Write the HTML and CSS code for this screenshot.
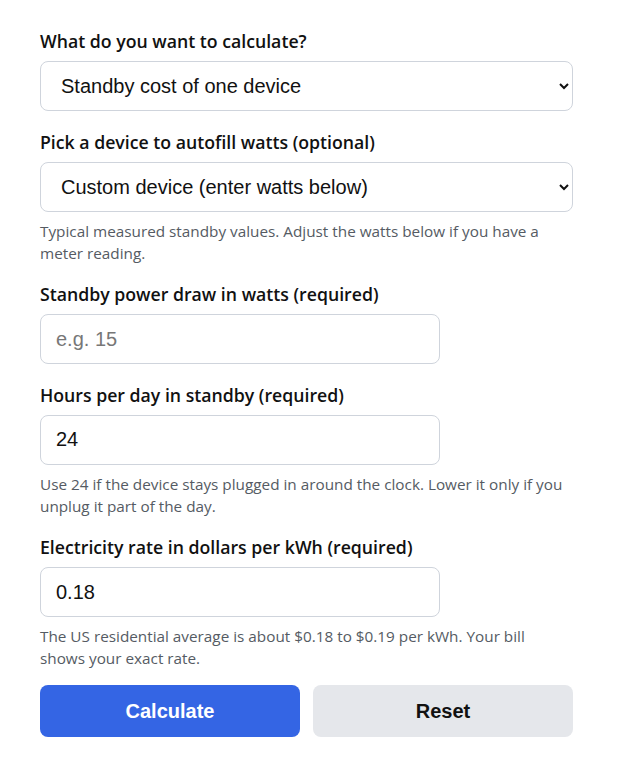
FILE: index.html
```
<!DOCTYPE html>
<html lang="en">
<head>
    <meta charset="UTF-8">
    <meta name="viewport" content="width=device-width, initial-scale=1.0">
    <title>Standby Power Cost Calculator</title>
    <link rel="stylesheet" href="styles.css">
</head>
<body>
    <form class="calc-form">
        <div class="field">
            <label for="mode">What do you want to calculate?</label>
            <select id="mode" class="control">
                <option>Standby cost of one device</option>
                <option>Standby cost of a whole home</option>
            </select>
        </div>

        <div class="field">
            <label for="device">Pick a device to autofill watts (optional)</label>
            <select id="device" class="control">
                <option>Custom device (enter watts below)</option>
                <option>TV</option>
                <option>Game console</option>
            </select>
            <p class="help">Typical measured standby values. Adjust the watts below if you have a meter reading.</p>
        </div>

        <div class="field">
            <label for="watts">Standby power draw in watts (required)</label>
            <input id="watts" class="control short" type="text" placeholder="e.g. 15">
        </div>

        <div class="field">
            <label for="hours">Hours per day in standby (required)</label>
            <input id="hours" class="control short" type="text" value="24">
            <p class="help">Use 24 if the device stays plugged in around the clock. Lower it only if you unplug it part of the day.</p>
        </div>

        <div class="field last">
            <label for="rate">Electricity rate in dollars per kWh (required)</label>
            <input id="rate" class="control short" type="text" value="0.18">
            <p class="help">The US residential average is about $0.18 to $0.19 per kWh. Your bill shows your exact rate.</p>
        </div>

        <div class="actions">
            <button type="button" class="btn btn-primary">Calculate</button>
            <button type="reset" class="btn btn-secondary">Reset</button>
        </div>
    </form>
</body>
</html>
```

FILE: styles.css
```
body {
    margin: 0;
    background: #ffffff;
    font-family: "Open Sans", Arial, sans-serif;
    color: #111111;
}
.calc-form {
    width: 533px;
    padding: 29px 40px 0 40px;
}
.field {
    margin-bottom: 18.5px;
}
.field.last {
    margin-bottom: 16px;
}
.field label {
    display: block;
    font-size: 17.7px;
    font-weight: 600;
    line-height: 24px;
    margin-bottom: 8px;
    color: #111111;
}
.control {
    box-sizing: border-box;
    display: block;
    width: 100%;
    height: 50px;
    padding: 0 14px 0 16px;
    border: 1px solid #cfd4dc;
    border-radius: 8px;
    background-color: #ffffff;
    font-family: "Liberation Sans", Arial, sans-serif;
    font-size: 20px;
    color: #111111;
}
.control.short {
    width: 400px;
    padding-left: 15px;
}
.control::placeholder {
    color: #777777;
}
.help {
    margin: 8px 0 0 0;
    padding-right: 6px;
    font-size: 15.3px;
    line-height: 22px;
    color: #555b63;
}
.actions {
    display: flex;
    gap: 13px;
}
.btn {
    flex: 1;
    height: 52px;
    border: none;
    border-radius: 8px;
    font-family: "Liberation Sans", Arial, sans-serif;
    font-size: 20px;
    font-weight: 700;
    cursor: pointer;
}
.btn-primary {
    background: #3465e4;
    color: #ffffff;
}
.btn-secondary {
    background: #e5e7eb;
    color: #111111;
}
```
